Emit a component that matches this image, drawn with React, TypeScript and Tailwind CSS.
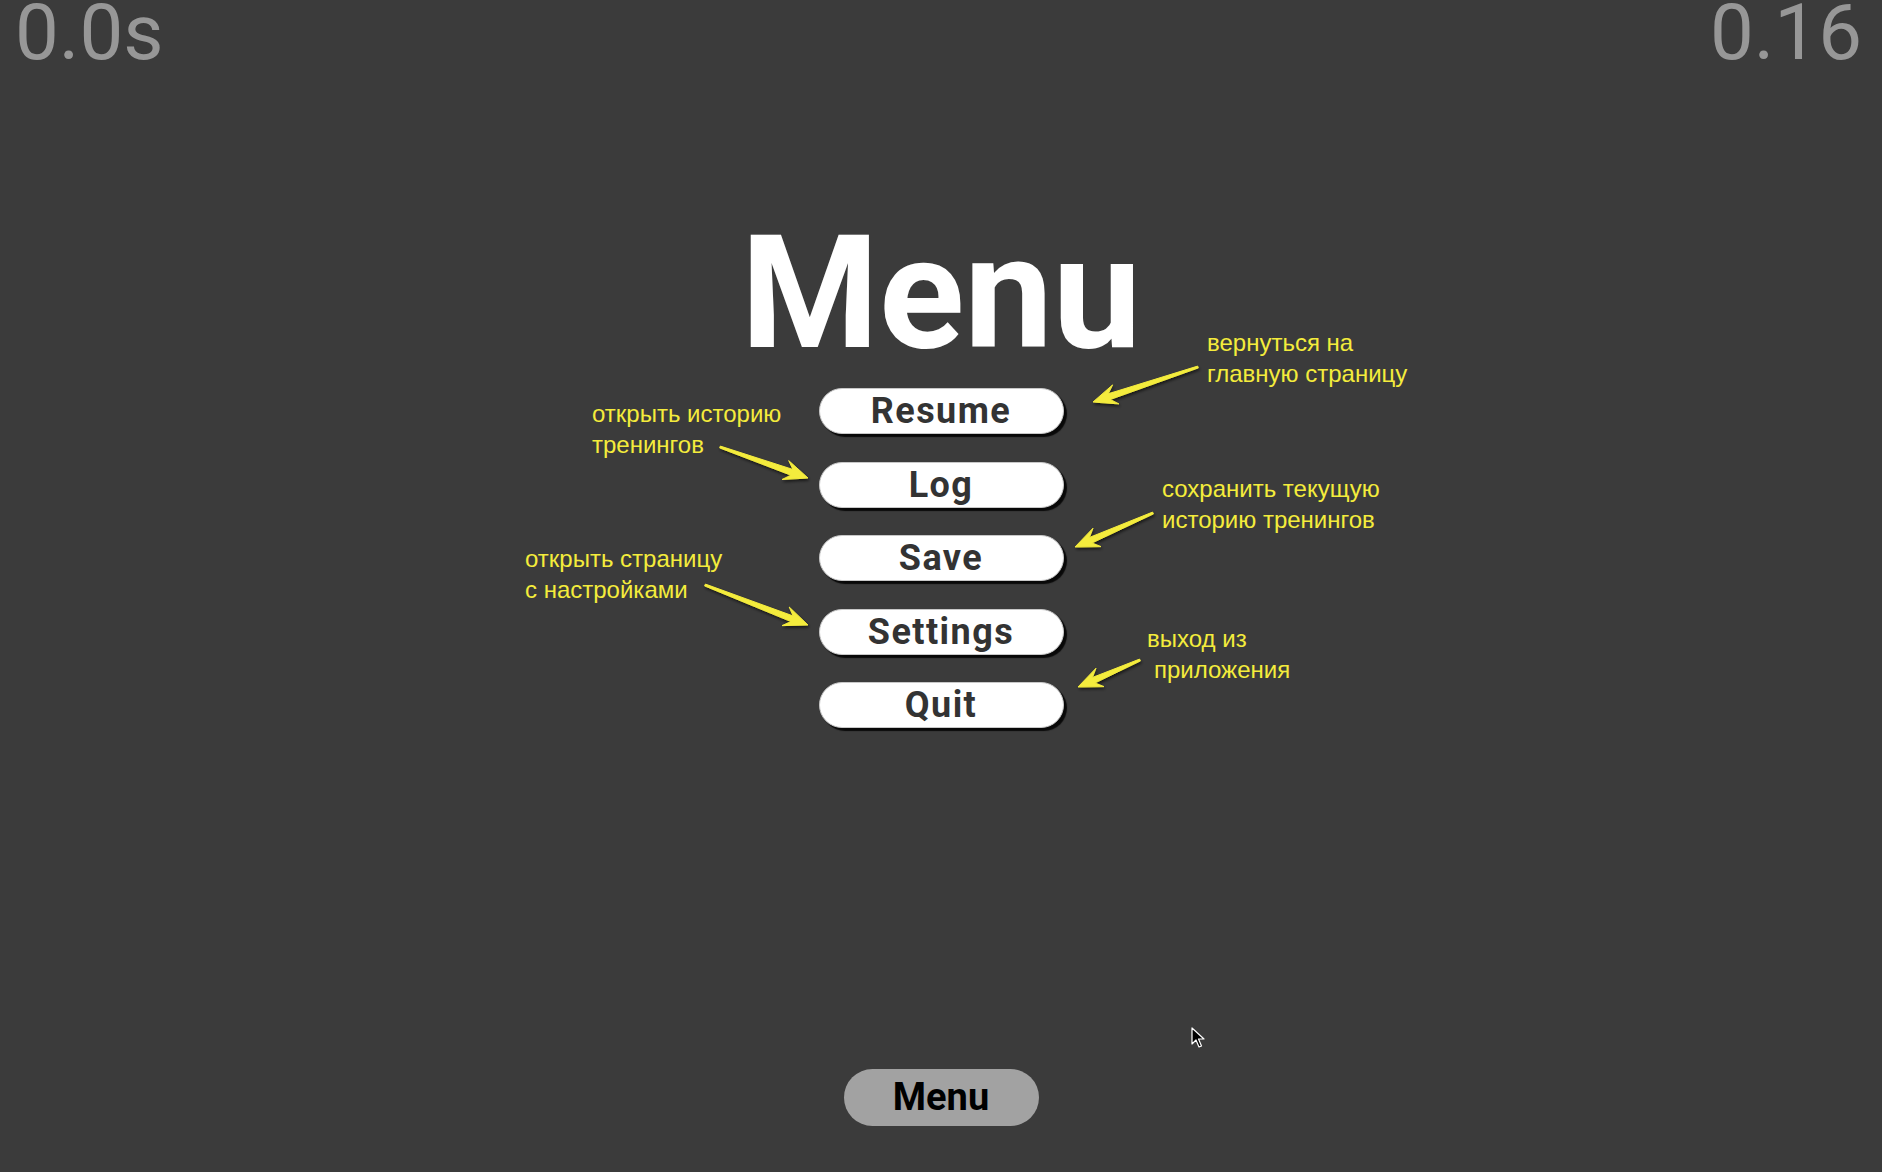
import React from "react";

type Pt = [number, number];

function arrowPoints(t: Pt, h: Pt): string {
  const dx = h[0] - t[0];
  const dy = h[1] - t[1];
  const L = Math.hypot(dx, dy);
  const ux = dx / L;
  const uy = dy / L;
  const px = -uy;
  const py = ux;
  const head = 24;
  const hw = 10;
  const sw = 3;
  const tw = 1;
  const local: Pt[] = [
    [0, -tw],
    [L - head + 7, -sw],
    [L - head, -hw],
    [L, 0],
    [L - head, hw],
    [L - head + 7, sw],
    [0, tw],
  ];
  return local
    .map(([a, b]) => `${(t[0] + ux * a + px * b).toFixed(1)},${(t[1] + uy * a + py * b).toFixed(1)}`)
    .join(" ");
}

const arrows: [Pt, Pt][] = [
  [[1198, 367], [1093, 402]],
  [[720, 447], [808, 478]],
  [[1153, 513], [1075, 547]],
  [[705, 585], [808, 625]],
  [[1140, 660], [1078, 687]],
];

const buttons = ["Resume", "Log", "Save", "Settings", "Quit"];

function Note({ className, lines }: { className: string; lines: React.ReactNode[] }) {
  return (
    <div
      className={`absolute text-[24px] leading-[30.5px] text-[#f4ec3c] whitespace-nowrap ${className}`}
      style={{ fontFamily: '"Liberation Sans", Arial, sans-serif' }}
    >
      {lines.map((l, i) => (
        <div key={i}>{l}</div>
      ))}
    </div>
  );
}

export default function App() {
  return (
    <div
      className="relative w-full h-[1172px] bg-[#3b3b3b] flex flex-col overflow-hidden"
      style={{ fontFamily: "Roboto, 'Noto Sans', sans-serif" }}
    >
      <div className="flex justify-between pl-[15px] pr-[20px] text-[78px] leading-[78px] -mt-[6px] text-[#979797]">
        <span>0.0s</span>
        <span>0.16</span>
      </div>

      <div className="flex flex-col items-center">
        <h1 className="mt-[142px] text-[158px] leading-[158px] font-bold text-white">Menu</h1>
        <div className="mt-[16px] flex flex-col gap-[27.5px]">
          {buttons.map((b) => (
            <button
              key={b}
              className="w-[245px] h-[46px] rounded-full bg-white border border-[#c8c8c8] shadow-[3px_3px_1px_rgba(0,0,0,0.85)] flex items-center justify-center text-[36px] font-bold tracking-[0.04em] text-[#333333]"
            >
              {b}
            </button>
          ))}
        </div>
      </div>

      <div className="mt-auto mb-[46px] flex justify-center">
        <button className="w-[195px] h-[57px] rounded-full bg-[#a2a2a2] text-[38px] font-bold text-black flex items-center justify-center">
          Menu
        </button>
      </div>

      <Note className="left-[1207px] top-[328px]" lines={["вернуться на", "главную страницу"]} />
      <Note className="left-[592px] top-[399px]" lines={["открыть историю", "тренингов"]} />
      <Note className="left-[1162px] top-[474px]" lines={["сохранить текущую", "историю тренингов"]} />
      <Note className="left-[525px] top-[544px]" lines={["открыть страницу", "с настройками"]} />
      <Note
        className="left-[1147px] top-[624px]"
        lines={["выход из", <span className="pl-[7px]">приложения</span>]}
      />

      <svg className="absolute inset-0 pointer-events-none" width="1882" height="1172">
        <defs>
          <filter id="sh" x="-20%" y="-20%" width="140%" height="140%">
            <feDropShadow dx="1" dy="2" stdDeviation="1.5" floodColor="#000" floodOpacity="0.6" />
          </filter>
        </defs>
        {arrows.map(([t, h], i) => (
          <polygon key={i} points={arrowPoints(t, h)} fill="#f4ec3c" stroke="#f4ec3c" strokeWidth="1" strokeLinejoin="round" filter="url(#sh)" />
        ))}
      </svg>

      <svg className="absolute left-[1191px] top-[1027px] pointer-events-none" width="16" height="22" viewBox="0 0 16 22">
        <path d="M1 1 L1 17 L5 13 L8 20 L10.5 19 L7.5 12 L13 12 Z" fill="#000" stroke="#fff" strokeWidth="1.2" strokeLinejoin="round" />
      </svg>
    </div>
  );
}
